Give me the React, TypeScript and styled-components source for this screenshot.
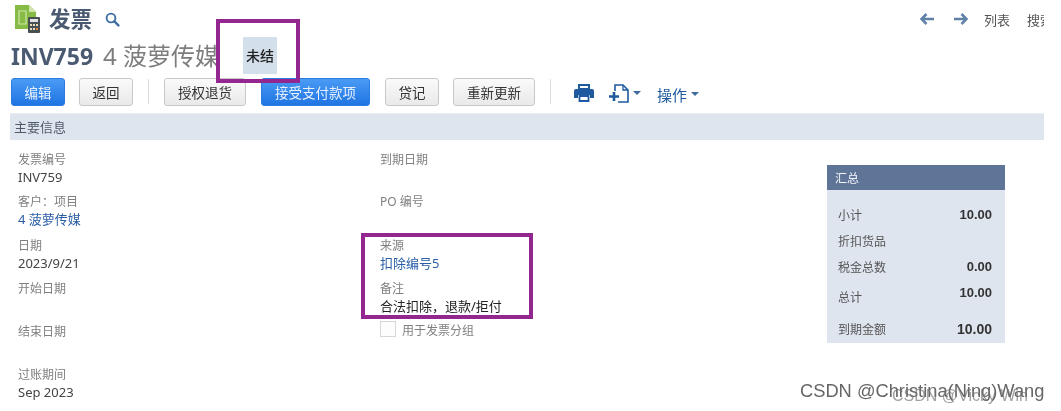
import React from "react"
import styled, { createGlobalStyle } from "styled-components"

const GlobalStyle = createGlobalStyle`
  html, body {
    margin: 0;
    padding: 0;
    background: #fff;
    overflow: hidden;
  }
  body {
    font-family: "Noto Sans", "Noto Sans CJK SC", sans-serif;
  }
`

const leftFields = [
  { label: "发票编号", value: "INV759", height: 42 },
  { label: "客户：项目", value: "4 菠萝传媒", link: true, height: 44 },
  { label: "日期", value: "2023/9/21", height: 43 },
  { label: "开始日期", height: 43 },
  { label: "结束日期", height: 43 },
  { label: "过账期间", value: "Sep 2023", height: 40 },
]

const summaryRows = [
  { label: "小计", value: "10.00", height: 26 },
  { label: "折扣货品", height: 26 },
  { label: "税金总数", value: "0.00", height: 26 },
  { label: "总计", value: "10.00", height: 34, raised: true },
  { label: "到期金额", value: "10.00", height: 30, large: true },
]

const LogoIcon = () => (
  <svg width="27" height="30" viewBox="0 0 27 30">
    <path d="M1 1h14l7 7v17H1z" fill="#86bb45" />
    <path d="M15 1v7h7z" fill="#cfe6a8" />
    <path d="M5 7h7v13H5z" fill="none" stroke="#cfe6a8" strokeWidth="1.2" />
    <rect x="14" y="13" width="12" height="16" rx="1" fill="#4a4f52" />
    <rect x="16" y="15" width="8" height="3" fill="#dfe3e6" />
    <path d="M16 20h2v2h-2zM19 20h2v2h-2zM22 20h2v2h-2zM16 24h2v2h-2zM19 24h2v2h-2z" fill="#e8dcc0" />
    <path d="M22 24h2v2h-2z" fill="#e08a3c" />
  </svg>
)

const SearchIcon = () => (
  <svg width="15" height="15" viewBox="0 0 15 15">
    <circle cx="6" cy="6" r="4.4" fill="none" stroke="#3f6ea6" strokeWidth="1.9" />
    <path d="M9.4 9.4l4 4" stroke="#3f6ea6" strokeWidth="2.4" strokeLinecap="round" />
  </svg>
)

const ArrowIcon = ({ flip }: { flip?: boolean }) => (
  <svg width="15" height="12" viewBox="0 0 15 12" style={{ transform: flip ? "scaleX(-1)" : undefined }}>
    <path d="M6.5 1L1.5 6l5 5M2 6h12" fill="none" stroke="#5f82a8" strokeWidth="2.6" />
  </svg>
)

const PrintIcon = () => (
  <svg width="20" height="18" viewBox="0 0 20 18">
    <path d="M5 1h10v4H5z" fill="none" stroke="#1f5a9e" strokeWidth="2" />
    <path d="M2 5h16a2 2 0 0 1 2 2v7h-4v-3H4v3H0V7a2 2 0 0 1 2-2z" fill="#1f5a9e" />
    <path d="M5.500 12h9v5h-9z" fill="#fff" stroke="#1f5a9e" strokeWidth="1.800" />
  </svg>
)

const NewDocIcon = () => (
  <svg width="20" height="19" viewBox="0 0 20 19">
    <path d="M6 7V1h8l5 5v12H9" fill="none" stroke="#1f5a9e" strokeWidth="1.600" />
    <path d="M14 1v5h5" fill="none" stroke="#1f5a9e" strokeWidth="1.300" />
    <path d="M0 12.500h10M5 8v9" stroke="#1f5a9e" strokeWidth="2.600" />
  </svg>
)

const Page = styled.div`
  position: relative;
  width: 1061px;
  height: 411px;
  padding-right: 17px;
  box-sizing: border-box;
  overflow: hidden;
  filter: blur(0.5px);
`

const TopRow = styled.div`
  display: flex;
  align-items: center;
  height: 34px;
  padding: 4px 0 0 14px;
  box-sizing: border-box;
  overflow: hidden;
`

const PageName = styled.h1`
  margin: 0 0 0 8px;
  font-size: 21.5px;
  font-weight: 700;
  color: #4a5a70;
  line-height: 28px;
`

const SearchButton = styled.span`
  display: flex;
  margin-left: 13px;
`

const TopNav = styled.nav`
  display: flex;
  align-items: center;
  margin-left: auto;
  margin-right: -9px;
  gap: 18px;
  font-size: 13px;
  color: #555;
`

const NavLabel = styled.span<{ $gap?: number }>`
  margin-left: ${(p) => p.$gap ?? 0}px;
`

const TitleRow = styled.div`
  display: flex;
  align-items: center;
  height: 43px;
  padding-left: 11px;
  font-size: 24px;
  line-height: 30px;
  color: #7d7d7d;
`

const DocNumber = styled.span`
  font-size: 23px;
  font-weight: 700;
  color: #4a5a70;
  margin-right: 10px;
`

const StatusBadge = styled.span`
  display: flex;
  align-items: center;
  justify-content: center;
  width: 34px;
  height: 37px;
  margin-left: 24px;
  background: #d3dfeb;
  color: #222;
  font-size: 14px;
  font-weight: 500;
`

const Toolbar = styled.div`
  display: flex;
  align-items: center;
  height: 29px;
  padding-left: 11px;
`

const Button = styled.button<{ $primary?: boolean; $width: number; $gap?: number }>`
  width: ${(p) => p.$width}px;
  height: 28px;
  margin-left: ${(p) => p.$gap ?? 0}px;
  padding: 0;
  box-sizing: border-box;
  border-radius: 3px;
  font-family: inherit;
  font-size: 13.5px;
  border: 1px solid ${(p) => (p.$primary ? "#2c7be0" : "#c8c8c8")};
  color: ${(p) => (p.$primary ? "#e6f0ff" : "#333")};
  background: ${(p) =>
    p.$primary ? "linear-gradient(#4a9bf5, #1f74e2)" : "linear-gradient(#fafafa, #e9e9e9)"};
`

const Divider = styled.span<{ $gap: number }>`
  width: 1px;
  height: 25px;
  margin-left: ${(p) => p.$gap}px;
  background: #dcdcdc;
`

const IconAction = styled.span<{ $gap: number; $drop?: number }>`
  display: flex;
  align-items: center;
  gap: 4px;
  margin-left: ${(p) => p.$gap}px;
  margin-top: ${(p) => p.$drop ?? 3}px;
  color: #1f5a9e;
  font-size: 15px;
`

const Caret = styled.span`
  width: 0;
  height: 0;
  border-left: 4px solid transparent;
  border-right: 4px solid transparent;
  border-top: 4px solid #3f6a9e;
`

const SectionBar = styled.div`
  display: flex;
  align-items: center;
  height: 27px;
  margin: 7px 0 0 10px;
  padding: 0 0 2px 4px;
  background: #dfe5ef;
  border-top: 1px solid #e8ecf3;
  box-sizing: border-box;
  color: #4f5b6b;
  font-size: 13px;
`

const Body = styled.div`
  display: flex;
  padding: 11px 0 0 18px;
`

const Column = styled.div<{ $width: number }>`
  display: flex;
  flex-direction: column;
  width: ${(p) => p.$width}px;
`

const Field = styled.div<{ $height: number }>`
  height: ${(p) => p.$height}px;
  font-size: 13px;
  line-height: 18px;
`

const FieldLabel = styled.div`
  color: #7f7f7f;
  font-size: 12px;
`

const FieldValue = styled.div<{ $link?: boolean; $dark?: boolean }>`
  margin-top: -1px;
  color: ${(p) => (p.$link ? "#2a5ea6" : p.$dark ? "#222" : "#444")};
`

const CheckRow = styled.div`
  display: flex;
  align-items: flex-start;
  gap: 6px;
  margin-top: -2px;
  color: #7f7f7f;
  font-size: 12px;
  line-height: 16px;
`

const CheckLabel = styled.span`
  margin-top: 2px;
`

const CheckBox = styled.span`
  width: 16px;
  height: 16px;
  box-sizing: border-box;
  border: 1px solid #d6d6d6;
  background: #fdfdfd;
`

const Summary = styled.aside`
  align-self: flex-start;
  width: 178px;
  height: 178px;
  margin-top: 14px;
  background: #dfe5ef;
`

const SummaryTitle = styled.div`
  display: flex;
  align-items: center;
  height: 25px;
  padding-left: 8px;
  background: #5f7597;
  color: #f2f5f9;
  font-size: 12px;
`

const SummaryRows = styled.div`
  padding: 12px 13px 0 11px;
`

const SummaryRow = styled.div<{ $height: number }>`
  display: flex;
  justify-content: space-between;
  align-items: center;
  height: ${(p) => p.$height}px;
  color: #555;
  font-size: 12px;
`

const Amount = styled.span<{ $large?: boolean; $raised?: boolean }>`
  font-family: "Liberation Sans", sans-serif;
  font-weight: 700;
  color: #333;
  font-size: ${(p) => (p.$large ? 14 : 13)}px;
  line-height: 18px;
  margin-bottom: ${(p) => (p.$raised ? 8 : 0)}px;
`

const Highlight = styled.div<{ $x: number; $y: number; $w: number; $h: number }>`
  position: absolute;
  left: ${(p) => p.$x}px;
  top: ${(p) => p.$y}px;
  width: ${(p) => p.$w}px;
  height: ${(p) => p.$h}px;
  box-sizing: border-box;
  border: 4px solid #93278f;
`

const Watermark = styled.div<{ $x: number; $y: number; $size: number; $color: string }>`
  position: absolute;
  left: ${(p) => p.$x}px;
  top: ${(p) => p.$y}px;
  font-family: "Liberation Sans", sans-serif;
  font-size: ${(p) => p.$size}px;
  line-height: 20px;
  white-space: nowrap;
  color: ${(p) => p.$color};
`

const App = () => (
  <>
    <GlobalStyle />
    <Page>
      <TopRow>
        <LogoIcon />
        <PageName>发票</PageName>
        <SearchButton>
          <SearchIcon />
        </SearchButton>
        <TopNav>
          <ArrowIcon />
          <ArrowIcon flip />
          <NavLabel $gap={-2}>列表</NavLabel>
          <NavLabel $gap={-1}>搜索</NavLabel>
        </TopNav>
      </TopRow>
      <TitleRow>
        <DocNumber>INV759</DocNumber>4 菠萝传媒
        <StatusBadge>未结</StatusBadge>
      </TitleRow>
      <Toolbar>
        <Button $primary $width={54}>编辑</Button>
        <Button $width={54} $gap={14}>返回</Button>
        <Divider $gap={15} />
        <Button $width={82} $gap={15}>授权退货</Button>
        <Button $primary $width={109} $gap={15}>接受支付款项</Button>
        <Button $width={54} $gap={15}>贷记</Button>
        <Button $width={82} $gap={14}>重新更新</Button>
        <Divider $gap={15} />
        <IconAction $gap={23}><PrintIcon /></IconAction>
        <IconAction $gap={15}><NewDocIcon /><Caret /></IconAction>
        <IconAction $gap={16} $drop={5}>操作<Caret /></IconAction>
      </Toolbar>
      <SectionBar>主要信息</SectionBar>
      <Body>
        <Column $width={362}>
          {leftFields.map((f) => (
            <Field key={f.label} $height={f.height}>
              <FieldLabel>{f.label}</FieldLabel>
              {f.value && <FieldValue $link={f.link}>{f.value}</FieldValue>}
            </Field>
          ))}
        </Column>
        <Column $width={447}>
          <Field $height={42}><FieldLabel>到期日期</FieldLabel></Field>
          <Field $height={44}><FieldLabel>PO 编号</FieldLabel></Field>
          <Field $height={43}>
            <FieldLabel>来源</FieldLabel>
            <FieldValue $link>扣除编号5</FieldValue>
          </Field>
          <Field $height={43}>
            <FieldLabel>备注</FieldLabel>
            <FieldValue $dark>合法扣除，退款/拒付</FieldValue>
          </Field>
          <CheckRow>
            <CheckBox />
            <CheckLabel>用于发票分组</CheckLabel>
          </CheckRow>
        </Column>
        <Summary>
          <SummaryTitle>汇总</SummaryTitle>
          <SummaryRows>
            {summaryRows.map((r) => (
              <SummaryRow key={r.label} $height={r.height}>
                {r.label}
                {r.value && <Amount $large={r.large} $raised={r.raised}>{r.value}</Amount>}
              </SummaryRow>
            ))}
          </SummaryRows>
        </Summary>
      </Body>
      <Highlight $x={216} $y={19} $w={84} $h={64} />
      <Highlight $x={361} $y={233} $w={172} $h={86} />
      <Watermark $x={800} $y={381} $size={18.300} $color="#666">CSDN @Christina(Ning)Wang</Watermark>
      <Watermark $x={892} $y={386} $size={16} $color="rgba(110,110,110,0.65)">CSDN @Vicky Win</Watermark>
    </Page>
  </>
)

export default App
